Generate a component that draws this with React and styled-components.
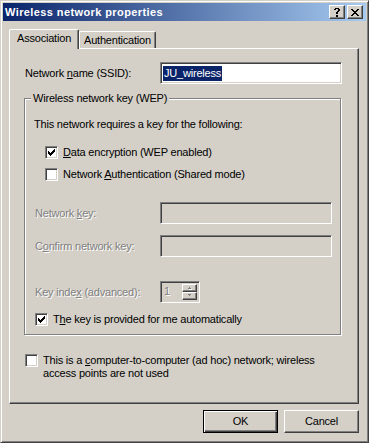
import React from 'react'
import styled, { createGlobalStyle } from 'styled-components';

const GlobalStyle = createGlobalStyle`
  html, body {
    margin: 0;
    padding: 0;
    background: #D4D0C8;
  }
  body {
    font-family: "Liberation Sans", Arial, sans-serif;
    font-size: 11px;
    line-height: 13px;
    letter-spacing: -0.2px;
    color: #000000;
  }
  #root {
    width: 369px;
    height: 443px;
  }
`;

// 체크 표시 (픽셀 패턴)
const CheckMark = () => (
  <svg width="7" height="7" viewBox="0 0 7 7" shapeRendering="crispEdges">
    <path fill="#000" d="M6 0h1v1h-1z M5 1h2v1h-2z M0 2h1v1h-1z M4 2h3v1h-3z M0 3h2v1h-2z M3 3h3v1h-3z M0 4h5v1h-5z M1 5h3v1h-3z M2 6h1v1h-1z" />
  </svg>
)

const CloseGlyph = () => (
  <svg width="8" height="7" viewBox="0 0 8 7" shapeRendering="crispEdges">
    <path fill="#000" d="M0 0h2v1h-2z M6 0h2v1h-2z M1 1h2v1h-2z M5 1h2v1h-2z M2 2h4v1h-4z M3 3h2v1h-2z M2 4h4v1h-4z M1 5h2v1h-2z M5 5h2v1h-2z M0 6h2v1h-2z M6 6h2v1h-2z" />
  </svg>
)

const HelpGlyph = () => (
  <svg width="6" height="9" viewBox="0 0 6 9" shapeRendering="crispEdges">
    <path fill="#000" d="M1 0h4v1h-4z M0 1h2v1h-2z M4 1h2v1h-2z M4 2h2v1h-2z M3 3h2v1h-2z M2 4h2v1h-2z M2 5h2v1h-2z M2 7h2v2h-2z" />
  </svg>
)

const Arrow = ({ down }) => (
  <svg width="6" height="4" viewBox="0 0 6 4" shapeRendering="crispEdges">
    <g transform={down ? 'matrix(1 0 0 -1 0 3)' : undefined}>
      <path fill="#fff" d="M2 1h1v1h-1z M1 2h3v1h-3z" transform="translate(1 1)" />
      <path fill="#808080" d="M2 1h1v1h-1z M1 2h3v1h-3z" />
    </g>
  </svg>
)

const Checkbox = ({ checked }) => (
  <StCheckBox>{checked && <CheckMark />}</StCheckBox>
)

const App = () => {
  return (
    <>
      <GlobalStyle />
      <StWindow>
        <StTitleBar>
          <StTitle>Wireless network properties</StTitle>
          <StCaptionButtons>
            <StCaptionButton><HelpGlyph /></StCaptionButton>
            <StCaptionButton><CloseGlyph /></StCaptionButton>
          </StCaptionButtons>
        </StTitleBar>

        <StBody>
          <StTabStrip>
            <StTab $active $width={70}>Association</StTab>
            <StTab $width={77}>Authentication</StTab>
          </StTabStrip>

          <StPanel>
            <StNameRow>
              <StLabel $width={135}>Network <U>n</U>ame (SSID):</StLabel>
              <StEdit $width={182}>
                <StSelected>JU_wireless</StSelected>
              </StEdit>
            </StNameRow>

            <StGroupBox>
              <StLegend>Wireless network key (WEP)</StLegend>
              <StIntro>This network requires a key for the following:</StIntro>

              <StCheckRow $indent={10} $top={15}>
                <Checkbox checked />
                <span><U>D</U>ata encryption (WEP enabled)</span>
              </StCheckRow>
              <StCheckRow $indent={10} $top={9}>
                <Checkbox />
                <span>Network <U>A</U>uthentication (Shared mode)</span>
              </StCheckRow>

              <StFieldRow $top={21}>
                <StLabel $width={125} $disabled>Network <U>k</U>ey:</StLabel>
                <StEdit $width={172} $disabled />
              </StFieldRow>
              <StFieldRow $top={11}>
                <StLabel $width={125} $disabled>C<U>o</U>nfirm network key:</StLabel>
                <StEdit $width={172} $disabled />
              </StFieldRow>

              <StFieldRow $top={24}>
                <StLabel $width={125} $disabled>Key inde<U>x</U> (advanced):</StLabel>
                <StSpin>
                  <StSpinValue>1</StSpinValue>
                  <StSpinButtons>
                    <StSpinButton><Arrow /></StSpinButton>
                    <StSpinButton><Arrow down /></StSpinButton>
                  </StSpinButtons>
                </StSpin>
              </StFieldRow>

              <StCheckRow $indent={0} $top={10}>
                <Checkbox checked />
                <span>T<U>h</U>e key is provided for me automatically</span>
              </StCheckRow>
            </StGroupBox>

            <StAdHocRow>
              <Checkbox />
              <span>
                This is a <U>c</U>omputer-to-computer (ad hoc) network; wireless<br />
                access points are not used
              </span>
            </StAdHocRow>
          </StPanel>

          <StButtonRow>
            <StButton $default>OK</StButton>
            <StButton>Cancel</StButton>
          </StButtonRow>
        </StBody>
      </StWindow>
    </>
  )
}

const StWindow = styled.div`
  box-sizing: border-box;
  width: 369px;
  height: 443px;
  border: 1px solid;
  border-color: #D4D0C8 #404040 #404040 #D4D0C8;
  box-shadow: inset 1px 1px #FFFFFF, inset -1px -1px #808080;
  padding: 2px;
  background: #D4D0C8;
  display: flex;
  flex-direction: column;
`;

const StTitleBar = styled.div`
  height: 18px;
  display: flex;
  align-items: center;
  justify-content: space-between;
  padding: 0 3px 0 2px;
  background: linear-gradient(to right, #0A246A, #A6CAF0);
`;

const StTitle = styled.div`
  color: #FFFFFF;
  font-weight: 700;
  font-size: 11px;
  letter-spacing: 0.4px;
  white-space: nowrap;
`;

const StCaptionButtons = styled.div`
  display: flex;
  gap: 2px;
`;

const StCaptionButton = styled.div`
  box-sizing: border-box;
  width: 16px;
  height: 14px;
  display: flex;
  align-items: center;
  justify-content: center;
  background: #D4D0C8;
  border: 1px solid;
  border-color: #FFFFFF #404040 #404040 #FFFFFF;
  box-shadow: inset -1px -1px #808080;
  padding-top: 1px;
`;

const StBody = styled.div`
  padding: 8px 7px 0 6px;
  display: flex;
  flex-direction: column;
`;

const StTabStrip = styled.div`
  display: flex;
  align-items: flex-end;
  height: 19px;
`;

const StTab = styled.div`
  box-sizing: border-box;
  width: ${p => p.$width}px;
  height: ${p => (p.$active ? 20 : 17)}px;
  margin-bottom: ${p => (p.$active ? -1 : 0)}px;
  padding: 2px 0 0 ${p => (p.$active ? 7 : 4)}px;
  position: relative;
  z-index: ${p => (p.$active ? 2 : 0)};
  background: #D4D0C8;
  border-top: 1px solid #FFFFFF;
  border-left: 1px solid #FFFFFF;
  border-right: 1px solid #404040;
  border-radius: 2px 2px 0 0;
  box-shadow: inset -1px 0 #808080;
  white-space: nowrap;
`;

const StPanel = styled.div`
  box-sizing: border-box;
  width: 350px;
  height: 356px;
  border: 1px solid;
  border-color: #FFFFFF #404040 #404040 #FFFFFF;
  box-shadow: inset -1px -1px #808080;
  padding-top: 13px;
  display: flex;
  flex-direction: column;
  position: relative;
  z-index: 1;
`;

const StNameRow = styled.div`
  display: flex;
  align-items: center;
  margin-left: 15px;
  height: 22px;
`;

const StFieldRow = styled.div`
  display: flex;
  align-items: center;
  height: 22px;
  margin-top: ${p => p.$top}px;
`;

const StLabel = styled.div`
  width: ${p => p.$width}px;
  flex-shrink: 0;
  white-space: nowrap;
  color: ${p => (p.$disabled ? '#808080' : '#000000')};
  text-shadow: ${p => (p.$disabled ? '1px 1px 0 #FFFFFF' : 'none')};
`;

const U = styled.span`
  text-decoration: underline;
  text-underline-offset: 1px;
`;

const StEdit = styled.div`
  box-sizing: border-box;
  width: ${p => p.$width}px;
  height: 22px;
  border: 1px solid;
  border-color: #808080 #FFFFFF #FFFFFF #808080;
  box-shadow: inset 1px 1px #404040, inset -1px -1px #D4D0C8;
  background: ${p => (p.$disabled ? '#D4D0C8' : '#FFFFFF')};
  padding: 3px 0 0 2px;
  display: flex;
  align-items: flex-start;
`;

const StSelected = styled.span`
  background: #0A246A;
  color: #FFFFFF;
  padding: 1px 1px 1px 1px;
  line-height: 13px;
`;

const StGroupBox = styled.div`
  box-sizing: border-box;
  position: relative;
  width: 317px;
  height: 237px;
  margin: 14px 0 0 14px;
  border: 1px solid #808080;
  box-shadow: inset 1px 1px #FFFFFF, 1px 1px #FFFFFF;
  padding: 19px 0 0 10px;
  display: flex;
  flex-direction: column;
`;

const StLegend = styled.div`
  position: absolute;
  top: -7px;
  left: 6px;
  padding: 0 2px;
  background: #D4D0C8;
  white-space: nowrap;
`;

const StIntro = styled.div`
  margin-left: -1px;
  white-space: nowrap;
`;

const StCheckRow = styled.div`
  display: flex;
  align-items: center;
  gap: 5px;
  margin: ${p => p.$top}px 0 0 ${p => p.$indent}px;
  white-space: nowrap;
`;

const StCheckBox = styled.div`
  box-sizing: border-box;
  width: 13px;
  height: 13px;
  flex-shrink: 0;
  border: 1px solid;
  border-color: #808080 #FFFFFF #FFFFFF #808080;
  box-shadow: inset 1px 1px #404040, inset -1px -1px #D4D0C8;
  background: #FFFFFF;
  display: flex;
  padding: 2px 0 0 2px;
`;

const StSpin = styled.div`
  box-sizing: border-box;
  width: 40px;
  height: 22px;
  border: 1px solid;
  border-color: #808080 #FFFFFF #FFFFFF #808080;
  box-shadow: inset 1px 1px #404040, inset -1px -1px #D4D0C8;
  background: #D4D0C8;
  padding: 2px 2px 2px 2px;
  display: flex;
`;

const StSpinValue = styled.div`
  flex: 1;
  padding: 1px 0 0 1px;
  color: #808080;
  text-shadow: 1px 1px 0 #FFFFFF;
`;

const StSpinButtons = styled.div`
  width: 15px;
  display: flex;
  flex-direction: column;
`;

const StSpinButton = styled.div`
  box-sizing: border-box;
  height: 9px;
  display: flex;
  align-items: center;
  justify-content: center;
  border: 1px solid;
  border-color: #FFFFFF #404040 #404040 #FFFFFF;
  box-shadow: inset -1px -1px #808080;
  padding-left: 1px;
`;

const StAdHocRow = styled.div`
  display: flex;
  align-items: flex-start;
  gap: 5px;
  margin: 19px 0 0 15px;
  white-space: nowrap;
`;

const StButtonRow = styled.div`
  display: flex;
  justify-content: flex-end;
  gap: 6px;
  width: 350px;
  margin-top: 6px;
`;

const StButton = styled.div`
  box-sizing: border-box;
  width: 75px;
  height: 23px;
  display: flex;
  align-items: center;
  justify-content: center;
  background: #D4D0C8;
  border: 1px solid;
  border-color: ${p => (p.$default ? '#000000' : '#FFFFFF #404040 #404040 #FFFFFF')};
  box-shadow: ${p => (p.$default
    ? 'inset 1px 1px #FFFFFF, inset -1px -1px #404040, inset -2px -2px #808080'
    : 'inset -1px -1px #808080')};
`;

export default App
